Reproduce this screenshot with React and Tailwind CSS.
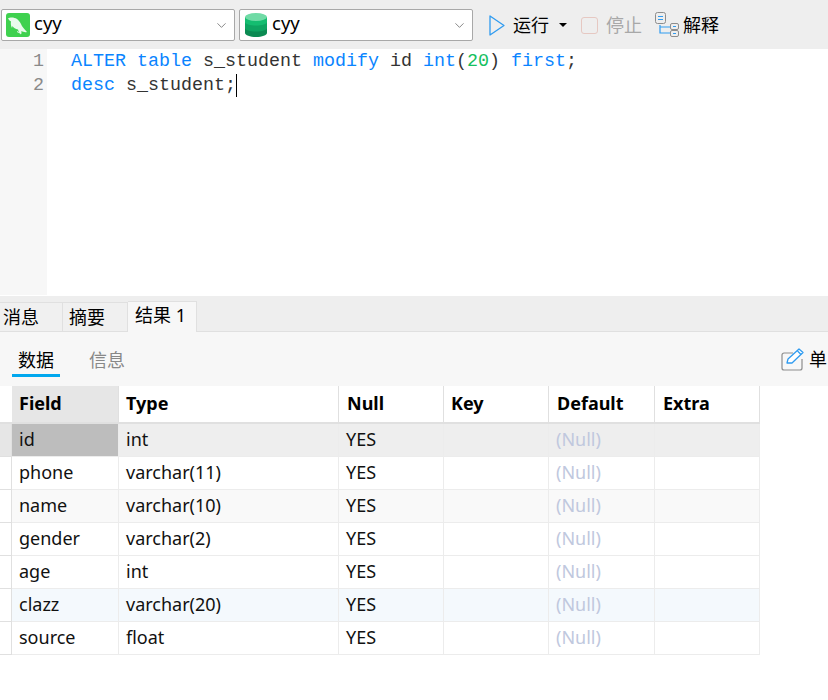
import React from 'react';
import { ChevronDown } from 'lucide-react';

const uiFont = "font-['Noto_Sans','Noto_Sans_CJK_SC',sans-serif]";

const rows = [
  { field: 'id', type: 'int', bg: 'bg-[#eeeeee]', selected: true },
  { field: 'phone', type: 'varchar(11)', bg: 'bg-white' },
  { field: 'name', type: 'varchar(10)', bg: 'bg-[#f9f9f9]' },
  { field: 'gender', type: 'varchar(2)', bg: 'bg-white' },
  { field: 'age', type: 'int', bg: 'bg-white' },
  { field: 'clazz', type: 'varchar(20)', bg: 'bg-[#f4f9fd]' },
  { field: 'source', type: 'float', bg: 'bg-white' },
];

const gridCols = 'grid grid-cols-[12px_107px_220px_105px_105px_106px_105px] w-[760px]';

const MysqlIcon = () => (
  <svg width="24" height="24" viewBox="0 0 24 24" className="shrink-0">
    <rect width="24" height="24" rx="3" fill="#3fd14f" />
    <path d="M2 5.500C4 4 8 4 11 6c1.500 1 3 3 4 5 1 2.500 3 5 6 8-2 .500-4 0-5.500-1l-.500 3.500c-1.500-1-2.500-3-3-5-2.500-.500-4.500-1.500-5.500-3.500l-.500 2C5 13 4.500 10.500 5 8.500 4 8 3 7 2 5.500z" fill="#e9fbec" />
    <path d="M11 18.500c1.500 1 3 1.500 4.500 1.500" stroke="#e9fbec" strokeWidth="1" fill="none" />
  </svg>
);

const DbIcon = () => (
  <svg width="22" height="24" viewBox="0 0 22 24" className="shrink-0">
    <path d="M0 4v16c0 2 5 4 11 4s11-2 11-4V4z" fill="#0b8a52" />
    <path d="M0 4v11c0 2 5 3.500 11 3.500S22 17 22 15V4z" fill="#0ea461" />
    <path d="M0 4v5c0 2 5 3.500 11 3.500S22 11 22 9V4z" fill="#14bd70" />
    <ellipse cx="11" cy="4" rx="11" ry="4" fill="#70dba6" />
  </svg>
);

const SelectBox = ({ icon, padding, gap }) => (
  <div className={`h-[32px] w-[234px] bg-white border border-[#a8a8a8] rounded-[2px] flex items-center ${padding} pr-[5px] text-black text-[18.500px]`}>
    {icon}
    <span className={`${gap} flex-1 leading-none pb-[3px]`}>cyy</span>
    <ChevronDown size={15} strokeWidth={1.25} className="text-[#666]" />
  </div>
);

const ExplainIcon = () => (
  <svg width="26" height="26" viewBox="0 0 26 26" fill="none" className="shrink-0">
    <path d="M5 13v8h10M5 15h10" stroke="#2f9bf0" strokeWidth="1.200" />
    <rect x="0.500" y="0.500" width="10" height="11" rx="2" stroke="#8d8d8d" />
    <path d="M3 4.500h5M3 7.500h5" stroke="#2f9bf0" />
    <rect x="15.500" y="11.500" width="8" height="6" rx="1.500" stroke="#8d8d8d" />
    <path d="M18 14.500h3" stroke="#2f9bf0" />
    <rect x="15.500" y="18.500" width="8" height="6" rx="1.500" stroke="#8d8d8d" />
    <path d="M18 21.500h3" stroke="#2f9bf0" />
  </svg>
);

const EditIcon = () => (
  <svg width="24" height="24" viewBox="0 0 24 24" fill="none" className="shrink-0">
    <path d="M12 5H3a2 2 0 0 0-2 2v13a2 2 0 0 0 2 2h16a2 2 0 0 0 2-2v-9" stroke="#8d8d8d" strokeWidth="1.200" />
    <path d="M6 15l1-4L18 1l4 3.500L11 15z" fill="#fff" stroke="#2f9bf0" strokeWidth="1.300" strokeLinejoin="round" />
    <path d="M16.500 3l3.500 3.500" stroke="#2f9bf0" strokeWidth="1.300" />
  </svg>
);

const Cell = ({ children, className = '' }) => (
  <div className={`h-[33px] border-r border-b border-[#ececec] pl-[7px] text-[18px] leading-[30px] overflow-hidden ${className}`}>
    {children}
  </div>
);

const HeadCell = ({ children, className = '' }) => (
  <div className={`h-[38px] border-r border-b-2 border-[#e0e0e0] text-[18px] leading-[34px] font-bold text-black ${className}`}>
    {children}
  </div>
);

export default function App() {
  return (
    <div className={`w-[828px] h-[700px] overflow-hidden bg-white text-[#111] ${uiFont}`}>
      {/* toolbar */}
      <div className="h-[49px] bg-[#eeeeee] flex items-center pl-[1px] pt-[1px]">
        <SelectBox padding="pl-[4px]" gap="ml-[4px]" icon={<MysqlIcon />} />
        <div className="w-[4px]" />
        <SelectBox padding="pl-[5px]" gap="ml-[5px]" icon={<DbIcon />} />
        <div className="flex items-center ml-[16px] text-[18px] text-black">
          <svg width="16" height="21" viewBox="0 0 16 21" fill="none">
            <path d="M1 1l14 9.500L1 20z" stroke="#2f9bf0" strokeWidth="1.300" strokeLinejoin="round" />
          </svg>
          <span className="ml-[8px]">运行</span>
          <span className="ml-[10px] w-0 h-0 border-x-[4px] border-x-transparent border-t-[4px] border-t-black" />
          <span className="ml-[14px] w-[17px] h-[17px] border border-[#e6c8c2] rounded-[3px]" />
          <span className="ml-[8px] text-[#a8a8a8]">停止</span>
          <span className="ml-[13px]"><ExplainIcon /></span>
          <span className="ml-[2px]">解释</span>
        </div>
      </div>

      {/* sql editor */}
      <div className="h-[247px] flex bg-white font-['Liberation_Mono',monospace] text-[18.330px] leading-[23.500px]">
        <div className="w-[47px] bg-[#f7f7f7] pr-[3px] text-right text-[#8a8a8a] pt-[1px] mb-[1px]">
          <div>1</div>
          <div>2</div>
        </div>
        <div className="pl-[24px] pt-[1px] whitespace-pre">
          <div>
            <span className="text-[#0a84ff]">ALTER table</span> <span className="text-[#333]">s_student</span>{' '}
            <span className="text-[#0a84ff]">modify</span> <span className="text-[#333]">id</span>{' '}
            <span className="text-[#0a84ff]">int</span><span className="text-[#333]">(</span>
            <span className="text-[#16c060]">20</span><span className="text-[#333]">)</span>{' '}
            <span className="text-[#0a84ff]">first</span><span className="text-[#333]">;</span>
          </div>
          <div>
            <span className="text-[#0a84ff]">desc</span> <span className="text-[#333]">s_student;</span>
            <span className="inline-block w-[1px] h-[23px] bg-black align-top" />
          </div>
        </div>
      </div>

      {/* result tabs */}
      <div className="h-[36px] bg-[#eeeeee] border-b border-[#e0e0e0] flex items-end pl-0 text-[18px] text-black">
        <div className="w-[63px] h-[29px] bg-[#f0f0f0] border-r border-t border-[#e0e0e0] pl-[3px] leading-[29px]">消息</div>
        <div className="w-[65px] h-[29px] bg-[#f0f0f0] border-r border-t border-[#e0e0e0] pl-[6px] leading-[29px]">摘要</div>
        <div className="w-[69px] h-[31px] bg-[#f7f7f7] border-r border-t border-[#e0e0e0] pl-[7px] leading-[26px] -mb-[1px]">结果 1</div>
      </div>

      {/* sub toolbar */}
      <div className="h-[54px] bg-[#f7f7f7] flex items-start text-[18px] overflow-hidden">
        <div className="ml-[12px] mt-[14px] w-[48px] h-[31px] text-center leading-[28px] text-black border-b-[3px] border-[#00a7ee]">数据</div>
        <div className="ml-[29px] mt-[14px] leading-[28px] text-[#888]">信息</div>
        <div className="ml-auto mt-[14px] flex items-center w-[47px] shrink-0 text-black whitespace-nowrap">
          <EditIcon />
          <span className="ml-[4px]">单</span>
        </div>
      </div>

      {/* result table */}
      <div className={gridCols}>
        <div className="h-[38px] border-b-2 border-[#e0e0e0] bg-white" />
        <HeadCell className="bg-[#e6e6e6] pl-[7px]">Field</HeadCell>
        <HeadCell className="pl-[7px]">Type</HeadCell>
        <HeadCell className="pl-[8px]">Null</HeadCell>
        <HeadCell className="pl-[7px]">Key</HeadCell>
        <HeadCell className="pl-[8px]">Default</HeadCell>
        <HeadCell className="pl-[8px]">Extra</HeadCell>
        {rows.map((row) => (
          <React.Fragment key={row.field}>
            <div className={`h-[33px] border-r border-b border-[#e0e0e0] ${row.selected ? 'bg-[#e6e6e6]' : 'bg-white'}`} />
            <Cell className={row.selected ? 'bg-[#bdbdbd]' : row.bg}>{row.field}</Cell>
            <Cell className={row.bg}>{row.type}</Cell>
            <Cell className={row.bg}>YES</Cell>
            <Cell className={row.bg} />
            <Cell className={`${row.bg} text-[#c0c8de]`}>(Null)</Cell>
            <Cell className={row.bg} />
          </React.Fragment>
        ))}
      </div>
    </div>
  );
}
